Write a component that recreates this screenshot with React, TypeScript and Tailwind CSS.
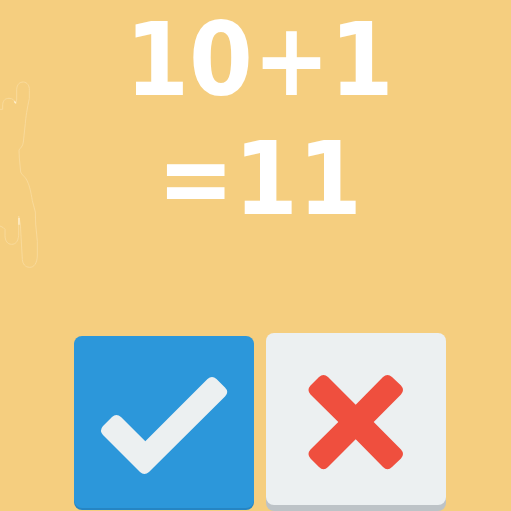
function HandOutline() {
  return (
    <svg
      aria-hidden="true"
      className="pointer-events-none absolute left-0 top-[60px] h-[230px] w-[60px]"
      viewBox="0 0 180 690"
      fill="none"
      stroke="#f9dca0"
      strokeWidth="2.5"
    >
      <path d="M0 148H8V134C9 120 17 115 27 115C38 115 45 121 47 132L50 120V88C51 72 60 66 70 66C82 67 89 77 88 91V116C82 142 77 174 76 190L70 246C69 259 60 265 57 270L58 294L62 336C66 346 77 350 83 366C88 376 93 397 97 422L106 456L107 492L112 544V588C111 610 102 622 89 622C76 622 68 612 67 598L64 546L61 492L56 468V526C54 546 46 553 35 553C23 553 15 543 15 526V508L10 503L0 498" />
      <path d="M57 474V494M43 124L47 129" stroke="#fff0cf" strokeWidth="4" />
    </svg>
  );
}

export default function App() {
  return (
    <main className="relative min-h-screen overflow-hidden bg-[#f5ce7f]">
      <HandOutline />
      <div className="flex flex-col items-center pl-2">
        <h1 className="text-center font-['DejaVu_Sans_Condensed','DejaVu_Sans',sans-serif] text-[102px] font-bold leading-[119px] text-white">
          10+1
          <br />
          =11
        </h1>
        <div className="mt-[95px] flex gap-3">
          <button
            type="button"
            aria-label="Correct"
            className="mt-[3px] h-[172px] w-[180px] rounded-lg bg-[#2c97da] shadow-[0_2px_0_#2585c4]"
          >
            <svg aria-hidden="true" viewBox="0 0 180 172" className="h-full w-full" fill="#ecf0f1">
              <path d="M29 90L38 81Q42.3 77 47 81L71.3 105.3L133.5 43Q138 39 142.5 43L151 51.5Q155.5 56 151 60.5L75 136Q70.3 140 66 136L29 99Q25 94.5 29 90Z" />
            </svg>
          </button>
          <button
            type="button"
            aria-label="Wrong"
            className="h-[172px] w-[180px] rounded-lg bg-[#ecf0f1] shadow-[0_6px_0_#bdc3c7]"
          >
            <svg aria-hidden="true" viewBox="0 0 180 172" className="h-full w-full" fill="#ef4f3e">
              <path d="M44.5 52.5L53 44Q57.5 40 62 44L89.7 71.7L117 44Q121.5 40 126 44L135 52.5Q139 57 135 61.5L107.7 89L135 116.5Q139 121 135 125.5L126 134Q121.5 138.5 117 134L89.7 106.3L62 134Q57.5 138.5 53 134L44.5 125.5Q40.5 121 44.5 116.5L72.3 89L44.5 61.5Q40.5 57 44.5 52.5Z" />
            </svg>
          </button>
        </div>
      </div>
    </main>
  );
}
